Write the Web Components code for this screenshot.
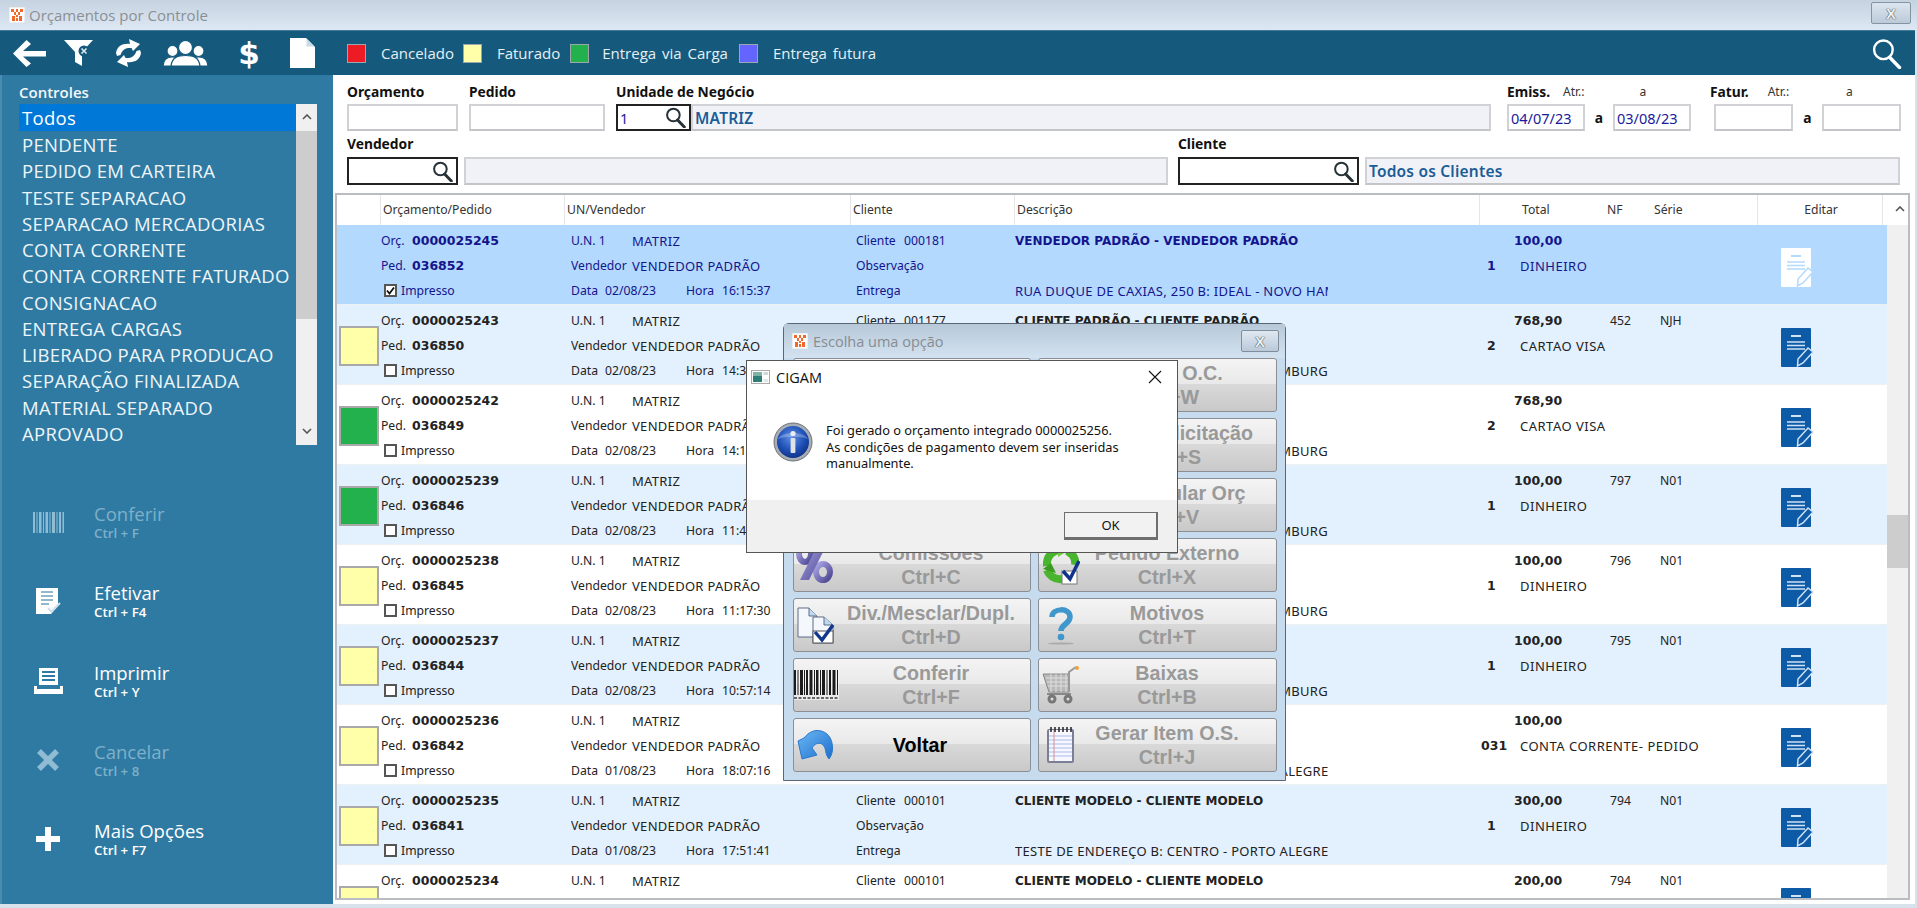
<!DOCTYPE html>
<html lang="pt-BR">
<head>
<meta charset="utf-8">
<title>Orçamentos por Controle</title>
<style>
  html, body { margin: 0; height: 100%; overflow: hidden; background: #d7e2ec; }
</style>
</head>
<body>
<erp-window></erp-window>

<script>
/* ------------- ICONS -------------- */
const svg = (w, h, body) => `<svg width="${w}" height="${h}" viewBox="0 0 ${w} ${h}" xmlns="http://www.w3.org/2000/svg" style="display:block;flex:none">${body}</svg>`;

const logo = svg(16, 16, `<rect width="16" height="16" fill="#fff" stroke="#ddd"/><g fill="#f0682a"><rect x="2" y="2" width="3" height="3"/><rect x="7" y="2" width="2" height="3"/><rect x="11" y="2" width="3" height="3"/><rect x="5" y="5" width="2" height="3"/><rect x="9" y="5" width="2" height="3"/><rect x="7" y="8" width="2" height="2"/><rect x="3" y="9" width="3" height="5"/><rect x="10" y="9" width="3" height="5"/><rect x="7" y="11" width="2" height="3"/></g>`);

const lens = (size, color, sw) => svg(size, size, `<circle cx="${size * .4}" cy="${size * .38}" r="${size * .3}" fill="none" stroke="${color}" stroke-width="${sw}"/><path d="M${size * .6} ${size * .62}L${size * .92} ${size * .95}" stroke="${color}" stroke-width="${sw + 1}" stroke-linecap="round"/>`);

const icons = {
  back: svg(33, 27, `<path d="M13.5 0L18 4 10 11H33V16.5H10L18 23.5 13.5 27 0 13.5Z" fill="#fff"/>`),
  filter: svg(29, 26, `<path d="M0 0H29L18 12V26L11 22V12Z" fill="#fff"/><circle cx="20" cy="11" r="5.5" fill="#155a7d"/><path d="M17.5 8.5l5 5M22.5 8.5l-5 5" stroke="#dfe9ef" stroke-width="1.6"/>`),
  refresh: svg(27, 28, `<g fill="#fff"><path d="M1 14C2 7 8 4 15 5L14 0 25 5 18 12 16.5 9C11.5 8.5 7.5 10 5.5 16L2 17Z"/><path d="M26 14C25 21 19 24 12 23L13 28 2 23 9 16 10.5 19C15.500 19.500 19.500 18 21.500 12L25 11Z"/></g>`),
  people: svg(45, 26, `<g fill="#fff" stroke="#155a7d" stroke-width="1.2"><circle cx="9.500" cy="11" r="5.500"/><circle cx="35.500" cy="11" r="5.500"/><path d="M0 26C.5 19 4 17 9.500 17S18 19 19 26Z"/><path d="M26 26C27 19 30 17 35.500 17S44.500 19 45 26Z"/><path d="M8 26C9 17 15 15.500 22.500 15.500S36 17 37 26Z"/><circle cx="22.500" cy="7.500" r="7"/></g>`),
  page: svg(25, 30, `<path d="M0 0H16L25 9V30H0Z" fill="#fff"/><path d="M16.500 .5V8.500H24.500" fill="#c9dbe5"/>`),
  barcode: svg(31, 21, `<g fill="#8fbcd3"><rect x="0" width="2" height="21"/><rect x="3.500" width="1" height="21"/><rect x="6" width="2.500" height="21"/><rect x="10" width="1" height="21"/><rect x="12.500" width="2.500" height="21"/><rect x="16.500" width="1" height="21"/><rect x="19" width="3" height="21"/><rect x="23.500" width="1" height="21"/><rect x="26" width="2" height="21"/><rect x="29.500" width="1.500" height="21"/></g>`),
  confirm: svg(25, 27, `<path d="M0 0H22V18L15 26H0Z" fill="#fff"/><path d="M5 4H17M5 8H17M5 12H17M5 16H13" stroke="#6ea1bc" stroke-width="1.600"/><path d="M12 20l3.500 3.500L24 15" fill="none" stroke="#cfe0ea" stroke-width="2"/>`),
  printer: svg(29, 26, `<path d="M5 0H24V17H5Z" fill="#fff"/><path d="M8 4H21M8 8H21M8 12H21" stroke="#2f7aa3" stroke-width="1.800"/><path d="M0 18H3V21H26V18H29V26H0Z" fill="#fff"/>`),
  cancel: svg(22, 22, `<path d="M2 2L20 20M20 2L2 20" stroke="#8fbcd3" stroke-width="5.500"/>`),
  plus: svg(24, 24, `<path d="M9 0H15V9H24V15H15V24H9V15H0V9H9Z" fill="#fff"/>`),
  info: svg(40, 40, `<defs><radialGradient id="g" cx=".45" cy=".35" r=".7"><stop offset="0" stop-color="#5f8fe8"/><stop offset=".6" stop-color="#1d4fb5"/><stop offset="1" stop-color="#0d2e82"/></radialGradient></defs><circle cx="20" cy="20" r="19" fill="#a7adb5" stroke="#6c7077"/><circle cx="20" cy="20" r="16" fill="url(#g)"/><path d="M5 17C9 9 31 9 35 17 28 14 12 14 5 17Z" fill="#fff" opacity=".25"/><circle cx="20" cy="11.500" r="2.600" fill="#e9edf2"/><rect x="17.600" y="16" width="4.800" height="15" rx="1" fill="#dfe3e8"/>`),
  cigam: svg(19, 14, `<rect x=".5" y=".5" width="18" height="13" fill="#fff" stroke="#aaa"/><rect x="2" y="2" width="9" height="10" fill="#2d7f78"/><rect x="2" y="2" width="9" height="4" fill="#7fb1a6"/><rect x="12.500" y="2" width="4.500" height="3" fill="#cfd8d8"/><rect x="12.500" y="9" width="4.500" height="3" fill="#dfe8e8"/>`),
  percent: svg(42, 38, `<defs><linearGradient id="p" x1="0" y1="0" x2="1" y2="1"><stop offset="0" stop-color="#a9a6e4"/><stop offset="1" stop-color="#4d4691"/></linearGradient></defs><g fill="none" stroke="url(#p)" stroke-width="6"><ellipse cx="10" cy="8" rx="6" ry="8"/><ellipse cx="28" cy="26" rx="7" ry="8"/></g><path d="M24 -4H33L14 34H5Z" fill="url(#p)"/>`),
  recycle: svg(38, 40, `<g fill="none" stroke="#49b52f" stroke-width="8"><path d="M5 21C4 11 11 5 19 5"/><path d="M20 34C12 35 7 30 5 25"/><path d="M25 6C31 9 34 14 33 20"/></g><path d="M16 -2L27 5 16 12Z" fill="#6ecf3f"/><path d="M1 24L9 18 14 28Z" fill="#3a9c23"/><rect x="20" y="26" width="15" height="13" fill="#fff" stroke="#777"/><path d="M21 26l7 8L37 16" fill="none" stroke="#12338c" stroke-width="3.500"/>`),
  docs: svg(38, 37, `<path d="M1 1H12L20 9V30H1Z" fill="#f4f8fc" stroke="#5c6d85"/><path d="M12 1V9H20" fill="#bfdaf0" stroke="#5c6d85"/><path d="M16 10H27L36 18V36H16Z" fill="#f4f8fc" stroke="#5c6d85"/><path d="M27 10V18H36" fill="#bfdaf0" stroke="#5c6d85"/><rect x="16" y="24" width="20" height="12" fill="#fff" stroke="#555"/><path d="M18 25l7 8 11-15" fill="none" stroke="#12388e" stroke-width="3.400"/>`),
  barcodeDark: svg(46, 30, `<rect width="46" height="30" fill="#fff" opacity=".55"/><g fill="#1b1b1b"><rect x="1" width="2" height="25"/><rect x="4.500" width="1" height="25"/><rect x="7" width="3" height="25"/><rect x="11" width="1" height="25"/><rect x="13" width="2" height="25"/><rect x="16.500" width="3" height="25"/><rect x="21" width="1" height="25"/><rect x="23" width="2.500" height="25"/><rect x="27" width="1" height="25"/><rect x="29" width="3" height="25"/><rect x="33.500" width="1" height="25"/><rect x="36" width="2" height="25"/><rect x="39.500" width="3" height="25"/><rect x="44" width="1" height="25"/></g><path d="M1 28H45" stroke="#666" stroke-width="2" stroke-dasharray="3 1.500"/>`),
  undo: svg(38, 30, `<defs><linearGradient id="u" x1="0" y1="0" x2="1" y2="1"><stop offset="0" stop-color="#6db8f2"/><stop offset="1" stop-color="#1c6fd0"/></linearGradient></defs><path d="M1 11L5 29 20 25 15 18C19 11 28 11 29 23 30 26 31 28 32 29 38 22 37 4 24 1 17 -1 11 3 7 8Z" fill="url(#u)" stroke="#2b78c9"/>`),
  question: svg(28, 40, `<path d="M5 12C5 3 23 2 23 12 23 19 14 19 14 26" fill="none" stroke="#3f97cc" stroke-width="5.500"/><circle cx="14" cy="32" r="3.300" fill="#3f97cc"/><ellipse cx="14" cy="38.500" rx="13" ry="1" fill="#aaa"/>`),
  cart: svg(38, 38, `<path d="M1 8H27V26H7Z" fill="#b9b9b9" stroke="#888"/><path d="M4 12H26M5 16H26M6 20H26M9 8V26M14 8V26M19 8V26M24 8V26" stroke="#dedede"/><path d="M27 26V6L34 1" fill="none" stroke="#999" stroke-width="2"/><circle cx="35" cy="2" r="2" fill="#f2a23a"/><path d="M5 28H29" stroke="#888" stroke-width="2"/><circle cx="10" cy="33" r="4.500" fill="#777"/><circle cx="26" cy="33" r="4.500" fill="#777"/><circle cx="10" cy="33" r="1.500" fill="#ddd"/><circle cx="26" cy="33" r="1.500" fill="#ddd"/>`),
  notepad: svg(30, 38, `<rect x="1" y="3" width="27" height="34" rx="2" fill="#7b7f96"/><rect x="3" y="4" width="23" height="31" fill="#f7f8ff"/><path d="M3 10H26M3 14H26M3 18H26M3 22H26M3 26H26M3 30H26" stroke="#a8b9e6"/><path d="M8 4V35" stroke="#d98f8f"/><path d="M5 1V6M9 1V6M13 1V6M17 1V6M21 1V6M25 1V6" stroke="#222" stroke-width="1.500"/>`)
};

const editIcon = (paper, ink) => svg(33, 40, `<rect width="30" height="39" fill="${paper}" rx="1"/><path d="M10 8H20" stroke="${ink}" stroke-width="2"/><path d="M6 14H24M6 17.500H24M6 21H24" stroke="${ink}" stroke-width="1.300"/><path d="M16.500 38L17 31 27 20 32 24 22 35Z" fill="${paper}" stroke="${ink}" stroke-width="1.500"/>`);

/* ------------ TITLE BAR ----------- */
class WindowTitle extends HTMLElement {
  constructor() {
    super();
    this.attachShadow({ mode: "open" }).innerHTML = /*html*/`
      <style>
        :host { display: flex; align-items: center; height: 30px; box-sizing: border-box; padding: 0 6px 0 9px;
          background: linear-gradient(#c5d2e0, #dde8f3); color: #8b8f94; font: 15px "Open Sans", sans-serif; gap: 4px; }
        span { flex: 1; }
        button { width: 40px; height: 22px; margin-top: -4px; border: 1px solid #8494a5; border-radius: 2px; padding: 0; background: linear-gradient(#dbe5ef, #bccad8);
          color: #eef3f7; text-shadow: 0 0 1px #333, 0 0 1px #333; font: bold 15px "Liberation Sans", sans-serif; }
      </style>
      ${logo}<span>Orçamentos por Controle</span><button>X</button>`;
  }
}
customElements.define("window-title", WindowTitle);

/* ------------- TOOLBAR ------------ */
class ColorLegend extends HTMLElement {
  constructor() {
    super();
    this.attachShadow({ mode: "open" }).innerHTML = /*html*/`
      <style>
        :host { display: flex; align-items: center; gap: 15px; font: 15px "Open Sans", sans-serif; word-spacing: 2px; color: #e6eff4; white-space: nowrap; }
        i { width: 19px; height: 19px; box-sizing: border-box; border: 1px solid #9aa8ae; background: var(--c); }
      </style>
      <i></i><slot></slot>`;
  }
}
customElements.define("color-legend", ColorLegend);

class MainToolbar extends HTMLElement {
  constructor() {
    super();
    this.attachShadow({ mode: "open" }).innerHTML = /*html*/`
      <style>
        :host { display: flex; align-items: center; height: 45px; box-sizing: border-box; padding: 0 13px; background: #155a7d;
          border-top: 1px solid #3f7c9c; margin: 0 2px 0 0; }
        .tools { display: flex; align-items: center; }
        .dollar { font: bold 31px "DejaVu Sans", sans-serif; color: #fff; width: 22px; text-align: center; line-height: 30px; }
        .legend { display: flex; align-items: center; margin-left: 32px; }
        .search { margin-left: auto; }
      </style>
      <div class="tools">
        ${icons.back}
        <div style="margin-left:18px">${icons.filter}</div>
        <div style="margin-left:22px">${icons.refresh}</div>
        <div style="margin-left:21px">${icons.people}</div>
        <div class="dollar" style="margin-left:30px">$</div>
        <div style="margin-left:30px">${icons.page}</div>
      </div>
      <div class="legend">
        <color-legend style="--c:#ed1c24">Cancelado</color-legend>
        <color-legend style="--c:#ffffaa;margin-left:9px">Faturado</color-legend>
        <color-legend style="--c:#22b14c;margin-left:10px;gap:13px">Entrega via Carga</color-legend>
        <color-legend style="--c:#6464ff;margin-left:11px">Entrega futura</color-legend>
      </div>
      <div class="search">${lens(31, "#fff", 2.4)}</div>`;
  }
}
customElements.define("main-toolbar", MainToolbar);

/* ------------- SIDEBAR ------------ */
class ControlList extends HTMLElement {
  constructor() {
    super();
    const items = ["Todos", "PENDENTE", "PEDIDO EM CARTEIRA", "TESTE SEPARACAO", "SEPARACAO MERCADORIAS", "CONTA CORRENTE",
      "CONTA CORRENTE FATURADO", "CONSIGNACAO", "ENTREGA CARGAS", "LIBERADO PARA PRODUCAO", "SEPARAÇÃO FINALIZADA", "MATERIAL SEPARADO", "APROVADO"];
    this.attachShadow({ mode: "open" }).innerHTML = /*html*/`
      <style>
        :host { display: flex; height: 341px; width: 298px; font: 18.500px "Open Sans", sans-serif; letter-spacing: .3px; color: #eef5f9; }
        .items { flex: 1; min-width: 0; overflow: hidden; }
        .items div { height: 26.250px; line-height: 27px; padding-left: 3px; white-space: nowrap; }
        .items .on { background: #0078d7; height: 27px; color: #fff; }
        .bar { width: 21px; background: #f0f0f0; display: flex; flex-direction: column; }
        .btn { height: 27px; }
        .thumb { height: 188px; background: #cdcdcd; }
        .rest { flex: 1; }
        svg { margin: 10px auto 0; }
      </style>
      <div class="items">${items.map((t, i) => `<div class="${i ? "" : "on"}">${t}</div>`).join("")}</div>
      <div class="bar">
        <div class="btn">${svg(10, 6, `<path d="M1 5L5 1 9 5" fill="none" stroke="#555" stroke-width="1.600"/>`)}</div>
        <div class="thumb"></div><div class="rest"></div>
        <div class="btn">${svg(10, 6, `<path d="M1 1L5 5 9 1" fill="none" stroke="#555" stroke-width="1.600"/>`)}</div>
      </div>`;
  }
}
customElements.define("control-list", ControlList);

class SideAction extends HTMLElement {
  constructor() {
    super();
    this.attachShadow({ mode: "open" }).innerHTML = /*html*/`
      <style>
        :host { display: flex; align-items: center; height: 38px; color: #fff; font-family: "Open Sans", sans-serif; }
        :host([off]) { color: #7fb0c9; }
        .ico { width: 58px; display: flex; justify-content: center; }
        .txt { margin-left: 17px; white-space: nowrap; }
        .t { font-size: 18.500px; line-height: 22px; }
        .s { font-size: 13.300px; line-height: 16px; font-weight: 600; }
      </style>
      <div class="ico">${icons[this.getAttribute("icon")]}</div>
      <div class="txt"><div class="t">${this.getAttribute("label")}</div><div class="s">${this.getAttribute("keys")}</div></div>`;
  }
}
customElements.define("side-action", SideAction);

class SidePanel extends HTMLElement {
  constructor() {
    super();
    this.attachShadow({ mode: "open" }).innerHTML = /*html*/`
      <style>
        :host { display: block; flex: none; width: 333px; box-sizing: border-box; border-left: 2px solid #4a8cb0; background: #2f7aa3; padding: 7px 0 0 17px; }
        h3 { margin: 0 0 1px; font: 600 15px/20px "Open Sans", sans-serif; padding-bottom: 1px; color: #f2f7fa; }
        .actions { display: flex; flex-direction: column; gap: 41.300px; margin: 58px 0 0 0; }
      </style>
      <h3>Controles</h3>
      <control-list></control-list>
      <div class="actions">
        <side-action off icon="barcode" label="Conferir" keys="Ctrl + F"></side-action>
        <side-action icon="confirm" label="Efetivar" keys="Ctrl + F4"></side-action>
        <side-action icon="printer" label="Imprimir" keys="Ctrl + Y"></side-action>
        <side-action off icon="cancel" label="Cancelar" keys="Ctrl + 8"></side-action>
        <side-action icon="plus" label="Mais Opções" keys="Ctrl + F7"></side-action>
      </div>`;
  }
}
customElements.define("side-panel", SidePanel);

/* ------------- FILTERS ------------ */
class FilterBox extends HTMLElement {
  constructor() {
    super();
    const lookup = this.hasAttribute("lookup");
    this.attachShadow({ mode: "open" }).innerHTML = /*html*/`
      <style>
        :host { display: flex; align-items: center; box-sizing: border-box; height: var(--h, 27px); background: #fff;
          border: 2px solid #d0d2d6; border-bottom-color: #c3c5c9; padding: 0 3px 0 2px; overflow: hidden; white-space: nowrap;
          font: 14.500px "Noto Sans", sans-serif; color: #1a1a9c; }
        :host([lookup]) { border-color: #222; }
        :host([ro]) { background: #f1f2f8; color: #1b5d96; font-weight: 600; font-size: 15.500px; letter-spacing: .2px; padding-left: 2px; }
        .lens { margin-left: auto; }
      </style>
      <slot></slot>${lookup ? `<div class="lens">${lens(21, "#263238", 2)}</div>` : ""}`;
  }
}
customElements.define("filter-box", FilterBox);

class FilterPanel extends HTMLElement {
  constructor() {
    super();
    this.attachShadow({ mode: "open" }).innerHTML = /*html*/`
      <style>
        :host { display: block; padding: 8px 0 0 14px; font: bold 13.800px "Noto Sans", sans-serif; color: #111; }
        .line { display: flex; }
        .line + .line { margin-top: 3px; --h: 28px; }
        .group { display: flex; flex-direction: column; flex: none; }
        label { display: flex; height: 21px; line-height: 17px; white-space: nowrap; }
        .line + .line label { height: 23px; line-height: 19px; }
        .fields { display: flex; align-items: center; }
        small { font-weight: 400; font-size: 12px; color: #333; }
        .a { width: 28px; text-align: center; flex: none; }
      </style>
      <div class="line">
        <div class="group" style="width:111px"><label>Orçamento</label><filter-box></filter-box></div>
        <div class="group" style="width:136px;margin-left:11px"><label>Pedido</label><filter-box></filter-box></div>
        <div class="group" style="width:875px;margin-left:11px"><label>Unidade de Negócio</label>
          <div class="fields"><filter-box lookup style="width:75px">1</filter-box><filter-box ro style="flex:1">MATRIZ</filter-box></div></div>
        <div class="group" style="width:184px;margin-left:16px"><label>Emiss.<small style="margin-left:13px">Atr.:</small><small style="margin-left:55px">a</small></label>
          <div class="fields"><filter-box style="width:78px">04/07/23</filter-box><span class="a">a</span><filter-box style="width:78px">03/08/23</filter-box></div></div>
        <div class="group" style="width:191px;margin-left:19px"><label>Fatur.<small style="margin-left:19px">Atr.:</small><small style="margin-left:57px">a</small></label>
          <div class="fields" style="margin-left:4px"><filter-box style="width:79px"></filter-box><span class="a" style="width:29px">a</span><filter-box style="width:79px"></filter-box></div></div>
      </div>
      <div class="line">
        <div class="group" style="width:111px"><label>Vendedor</label><filter-box lookup></filter-box></div>
        <div class="group" style="width:704px;margin-left:6px"><label></label><filter-box ro></filter-box></div>
        <div class="group" style="width:181px;margin-left:10px"><label>Cliente</label><filter-box lookup></filter-box></div>
        <div class="group" style="width:535px;margin-left:6px"><label></label><filter-box ro>Todos os Clientes</filter-box></div>
      </div>`;
  }
}
customElements.define("filter-panel", FilterPanel);

/* -------------- GRID -------------- */
const grid_cols = "44px 190px 285px 159px 313px 152px 300px 107px";

class BudgetRow extends HTMLElement {
  connectedCallback() {
    const d = this.data;
    this.attachShadow({ mode: "open" }).innerHTML = /*html*/`
      <style>
        :host { display: grid; grid-template-columns: ${grid_cols}; height: 80px; box-sizing: border-box; flex: none; overflow: hidden;
          border-bottom: 1px solid #eef0f2; background: var(--bg, #fff); color: var(--fg, #222); font: 12.200px "Noto Sans", sans-serif; }
        .sw { width: 40px; height: 40px; box-sizing: border-box; margin: 21px 0 0 2px; border: 2px solid #a9a9a9; background: ${d.color || "transparent"}; }
        .cell { padding-top: 3px; white-space: nowrap; overflow: hidden; min-width: 0; }
        .l { display: flex; height: 25px; align-items: center; }
        .l > span { flex: none; }
        b { font: bold 12.500px "DejaVu Sans", sans-serif; }
        .u { font-size: 13px; letter-spacing: .3px; }
        .check { width: 13px; height: 13px; box-sizing: border-box; border: 2px solid #555; background: #fff; margin: 0 4px 0 3px; }
        .tail { justify-content: flex-end; }
        .edit { padding: 23px 0 0 1px; }
      </style>
      ${d.color ? `<div class="sw"></div>` : "<div></div>"}
      <div class="cell">
        <div class="l"><span style="width:31px">Orç.</span><b>${d.orc}</b></div>
        <div class="l"><span style="width:31px">Ped.</span><b>${d.ped}</b></div>
        <div class="l"><span class="check">${d.sel ? svg(9, 9, `<path d="M1 4.500L3.500 7.500 8 1.500" fill="none" stroke="#111" stroke-width="1.800"/>`) : ""}</span>Impresso</div>
      </div>
      <div class="cell">
        <div class="l"><span style="width:61px">U.N. 1</span><span class="u">MATRIZ</span></div>
        <div class="l"><span style="width:61px">Vendedor</span><span class="u">VENDEDOR PADRÃO</span></div>
        <div class="l"><span style="width:34px">Data</span><span style="width:81px">${d.date}</span><span style="width:36px">Hora</span>${d.time}</div>
      </div>
      <div class="cell">
        <div class="l"><span style="width:48px">Cliente</span>${d.cli}</div>
        <div class="l">Observação</div>
        <div class="l">Entrega</div>
      </div>
      <div class="cell">
        <div class="l"><b style="font-size:12px">${d.name}</b></div>
        <div class="l"></div>
        <div class="l ${d.tail ? "tail" : ""}"><span class="u">${d.addr}</span></div>
      </div>
      <div></div>
      <div class="cell">
        <div class="l"><b style="width:130px;padding-left:34px;box-sizing:border-box">${d.total}</b><span style="width:50px">${d.nf || ""}</span>${d.serie || ""}</div>
        <div class="l"><b style="width:40px;flex:none;padding-left:${d.qty.length > 1 ? 1 : 7}px;box-sizing:border-box">${d.qty}</b><span class="u" style="letter-spacing:.5px">${d.pay}</span></div>
      </div>
      <div class="edit">${d.sel ? editIcon("#fff", "#b3d9ff") : editIcon("#0d5aa7", "#cfe1f3")}</div>`;
  }
}
customElements.define("budget-row", BudgetRow);

const y = "#ffffaa", g = "#22b14c";
const nh = "RUA DUQUE DE CAXIAS, 250 B: IDEAL - NOVO HAMBURG";
const cp = "CLIENTE PADRÃO - CLIENTE PADRÃO", cm = "CLIENTE MODELO - CLIENTE MODELO";
const budget_rows = [
  { sel: 1, orc: "0000025245", ped: "036852", date: "02/08/23", time: "16:15:37", cli: "000181", name: "VENDEDOR PADRÃO - VENDEDOR PADRÃO", addr: "RUA DUQUE DE CAXIAS, 250 B: IDEAL - NOVO HAMBURGO", total: "100,00", qty: "1", pay: "DINHEIRO" },
  { color: y, orc: "0000025243", ped: "036850", date: "02/08/23", time: "14:32:08", cli: "001177", name: cp, addr: nh, tail: 1, total: "768,90", nf: "452", serie: "NJH", qty: "2", pay: "CARTAO VISA" },
  { color: g, orc: "0000025242", ped: "036849", date: "02/08/23", time: "14:18:21", cli: "001177", name: cp, addr: nh, tail: 1, total: "768,90", qty: "2", pay: "CARTAO VISA" },
  { color: g, orc: "0000025239", ped: "036846", date: "02/08/23", time: "11:41:52", cli: "001177", name: cp, addr: nh, tail: 1, total: "100,00", nf: "797", serie: "N01", qty: "1", pay: "DINHEIRO" },
  { color: y, orc: "0000025238", ped: "036845", date: "02/08/23", time: "11:17:30", cli: "001177", name: cp, addr: nh, tail: 1, total: "100,00", nf: "796", serie: "N01", qty: "1", pay: "DINHEIRO" },
  { color: y, orc: "0000025237", ped: "036844", date: "02/08/23", time: "10:57:14", cli: "001177", name: cp, addr: nh, tail: 1, total: "100,00", nf: "795", serie: "N01", qty: "1", pay: "DINHEIRO" },
  { color: y, orc: "0000025236", ped: "036842", date: "01/08/23", time: "18:07:16", cli: "000101", name: cm, addr: "TESTE DE ENDEREÇO B: CENTRO - PORTO ALEGRE", total: "100,00", qty: "031", pay: "CONTA CORRENTE- PEDIDO" },
  { color: y, orc: "0000025235", ped: "036841", date: "01/08/23", time: "17:51:41", cli: "000101", name: cm, addr: "TESTE DE ENDEREÇO B: CENTRO - PORTO ALEGRE", total: "300,00", nf: "794", serie: "N01", qty: "1", pay: "DINHEIRO" },
  { color: y, orc: "0000025234", ped: "036840", date: "01/08/23", time: "17:40:12", cli: "000101", name: cm, addr: "TESTE DE ENDEREÇO B: CENTRO - PORTO ALEGRE", total: "200,00", nf: "794", serie: "N01", qty: "1", pay: "DINHEIRO" }
];

class BudgetGrid extends HTMLElement {
  constructor() {
    super();
    const heads = [["", 44], ["Orçamento/Pedido", 184], ["UN/Vendedor", 286], ["Cliente", 164], ["Descrição", 465]];
    this.attachShadow({ mode: "open" }).innerHTML = /*html*/`
      <style>
        :host { display: flex; flex-direction: column; height: 707px; margin: 8px 5px 0 2px; border: 2px solid #b9bcc0; box-sizing: border-box; background: #fff; }
        .wrap { display: flex; flex: 1; min-height: 0; }
        .table { flex: 1; min-width: 0; display: flex; flex-direction: column; overflow: hidden; }
        .head { display: flex; height: 30px; flex: none; font: 12.200px/30px "Noto Sans", sans-serif; color: #333; }
        .head div { box-sizing: border-box; flex: none; border-right: 1px solid #e6e6e6; padding-left: 2px; white-space: nowrap; }
        .bar { width: 21px; flex: none; background: #f0f0f0; display: flex; flex-direction: column; }
        .bar .up { height: 30px; background: #fff; padding: 11px 0 0 8px; box-sizing: border-box; }
        .bar .gap1 { height: 290px; }
        .bar .thumb { height: 53px; background: #cdcdcd; }
      </style>
      <div class="wrap">
        <div class="table">
          <div class="head">
            ${heads.map(h => `<div style="width:${h[1]}px">${h[0]}</div>`).join("")}
            <div style="width:278px;display:flex"><span style="width:40px"></span><span style="width:85px">Total</span><span style="width:47px">NF</span><span>Série</span></div>
            <div style="width:125px;text-align:center">Editar</div>
          </div>
          <div class="rows"></div>
        </div>
        <div class="bar"><div class="up">${svg(10, 6, `<path d="M1 5L5 1 9 5" fill="none" stroke="#555" stroke-width="1.600"/>`)}</div><div class="gap1"></div><div class="thumb"></div></div>
      </div>`;
    const list = this.shadowRoot.querySelector(".rows");
    budget_rows.forEach((item, i) => {
      const row = document.createElement("budget-row");
      row.data = item;
      if (item.sel) row.style.cssText = "--bg:#b3d9ff;--fg:#14148c";
      else if (i % 2) row.style.cssText = "--bg:#e3f0fd";
      list.append(row);
    });
  }
}
customElements.define("budget-grid", BudgetGrid);

/* ------------- DIALOGS ------------ */
class ChoiceButton extends HTMLElement {
  constructor() {
    super();
    this.attachShadow({ mode: "open" }).innerHTML = /*html*/`
      <style>
        :host { --shift: 21px; display: flex; align-items: center; height: 54px; box-sizing: border-box; overflow: hidden; border: 1px solid #8b8f93; border-radius: 3px; padding-left: 4px;
          background: linear-gradient(#f4f4f4 0, #e9e9e9 48%, #d9d9d9 48%, #c9c9c9 100%); color: #999;
          font: bold 19.700px/24px "Liberation Sans", sans-serif; }
        :host(:nth-child(odd)) { --shift: 2px; }
        :host([active]) { color: #000; }
        .ico { width: 36px; flex: none; display: flex; justify-content: center; }
        .txt { flex: 1; min-width: 0; display: flex; flex-direction: column; align-items: center; white-space: nowrap; padding-right: var(--shift); }
        ::slotted(span) { display: block; flex: none; }
      </style>
      <div class="ico">${icons[this.getAttribute("icon")] || ""}</div>
      <div class="txt"><slot></slot></div>`;
  }
}
customElements.define("choice-button", ChoiceButton);

class ChoiceDialog extends HTMLElement {
  constructor() {
    super();
    this.attachShadow({ mode: "open" }).innerHTML = /*html*/`
      <style>
        :host { position: absolute; left: 783px; top: 323px; width: 503px; height: 458px; box-sizing: border-box; border: 1px solid #5c6670; border-radius: 6px 6px 0 0; background: #c6dcee; display: block; }
        .title { display: flex; align-items: center; height: 34px; box-sizing: border-box; padding: 0 6px 0 8px; gap: 5px; background: linear-gradient(#b7c8d8, #d2e2f0); color: #878c92; font: 14.500px "Open Sans", sans-serif; }
        .title span { flex: 1; }
        .title button { width: 38px; height: 22px; border: 1px solid #7f8d9c; border-radius: 2px; background: linear-gradient(#dfe8f1, #bac9d9); color: #eef3f7; text-shadow: 0 0 1px #333, 0 0 1px #333; padding: 0; font: bold 15px "Liberation Sans", sans-serif; }
        .grid { display: grid; grid-template-columns: 238px 239px; gap: 6px 7px; margin: 0 0 0 9px; }
      </style>
      <div class="title">${logo}<span>Escolha uma opção</span><button>X</button></div>
      <div class="grid"><slot></slot></div>`;
  }
}
customElements.define("choice-dialog", ChoiceDialog);

class MessageBox extends HTMLElement {
  constructor() {
    super();
    this.attachShadow({ mode: "open" }).innerHTML = /*html*/`
      <style>
        :host { position: absolute; left: 746px; top: 360px; width: 432px; height: 193px; box-sizing: border-box; border: 1px solid #555; background: #fff; display: flex; flex-direction: column; font: 12.800px/16.500px "Noto Sans", sans-serif; color: #111; }
        .title { display: flex; align-items: center; height: 32px; padding: 0 15px 0 4px; gap: 6px; font: 14.500px "Open Sans", sans-serif; }
        .title span { flex: 1; }
        .body { flex: 1; display: flex; align-items: flex-start; padding: 29px 0 0 26px; gap: 13px; }
        .body p { margin: 0; }
        .foot { height: 52px; background: #f0f0f0; display: flex; justify-content: flex-end; align-items: center; padding-right: 19px; }
        button { width: 94px; height: 28px; background: #f2f2f2; border: 2px solid #6f6f6f; border-width: 1px 2px 3px 1px; font: 13px "Noto Sans", sans-serif; color: #111; padding: 0; }
      </style>
      <div class="title">${icons.cigam}<span>CIGAM</span>${svg(14, 14, `<path d="M1 1L13 13M13 1L1 13" stroke="#111" stroke-width="1.100"/>`)}</div>
      <div class="body">${icons.info}<p><slot></slot></p></div>
      <div class="foot"><button>OK</button></div>`;
  }
}
customElements.define("message-box", MessageBox);

/* ------------- WINDOW ------------- */
class ErpWindow extends HTMLElement {
  constructor() {
    super();
    this.attachShadow({ mode: "open" }).innerHTML = /*html*/`
      <style>
        :host { display: block; position: relative; width: 1917px; height: 908px; overflow: hidden; background: #d7e2ec; }
        .main { display: flex; height: 829px; }
        .content { flex: 1; min-width: 0; background: #fff; margin-right: 2px; overflow: hidden; }
      </style>
      <window-title></window-title>
      <main-toolbar></main-toolbar>
      <div class="main">
        <side-panel></side-panel>
        <div class="content">
          <filter-panel></filter-panel>
          <budget-grid></budget-grid>
        </div>
      </div>
      <choice-dialog>
        <choice-button><span>Pedido Compra</span><span>Ctrl+G</span></choice-button>
        <choice-button><span>Pedido O.C.</span><span>Ctrl+W</span></choice-button>
        <choice-button><span>Orçamento</span><span>Ctrl+O</span></choice-button>
        <choice-button style="--shift:11px"><span>Gerar Solicitação</span><span>Ctrl+S</span></choice-button>
        <choice-button><span>Copiar</span><span>Ctrl+K</span></choice-button>
        <choice-button style="--shift:15px"><span>Desvincular Orç</span><span>Ctrl+V</span></choice-button>
        <choice-button icon="percent"><span>Comissões</span><span>Ctrl+C</span></choice-button>
        <choice-button icon="recycle"><span>Pedido Externo</span><span>Ctrl+X</span></choice-button>
        <choice-button icon="docs"><span>Div./Mesclar/Dupl.</span><span>Ctrl+D</span></choice-button>
        <choice-button icon="question"><span>Motivos</span><span>Ctrl+T</span></choice-button>
        <choice-button icon="barcodeDark"><span>Conferir</span><span>Ctrl+F</span></choice-button>
        <choice-button icon="cart"><span>Baixas</span><span>Ctrl+B</span></choice-button>
        <choice-button active icon="undo" style="--shift:24px"><span>Voltar</span></choice-button>
        <choice-button icon="notepad"><span>Gerar Item O.S.</span><span>Ctrl+J</span></choice-button>
      </choice-dialog>
      <message-box>Foi gerado o orçamento integrado 0000025256.<br>As condições de pagamento devem ser inseridas<br>manualmente.</message-box>`;
  }
}
customElements.define("erp-window", ErpWindow);
</script>
</body>
</html>
